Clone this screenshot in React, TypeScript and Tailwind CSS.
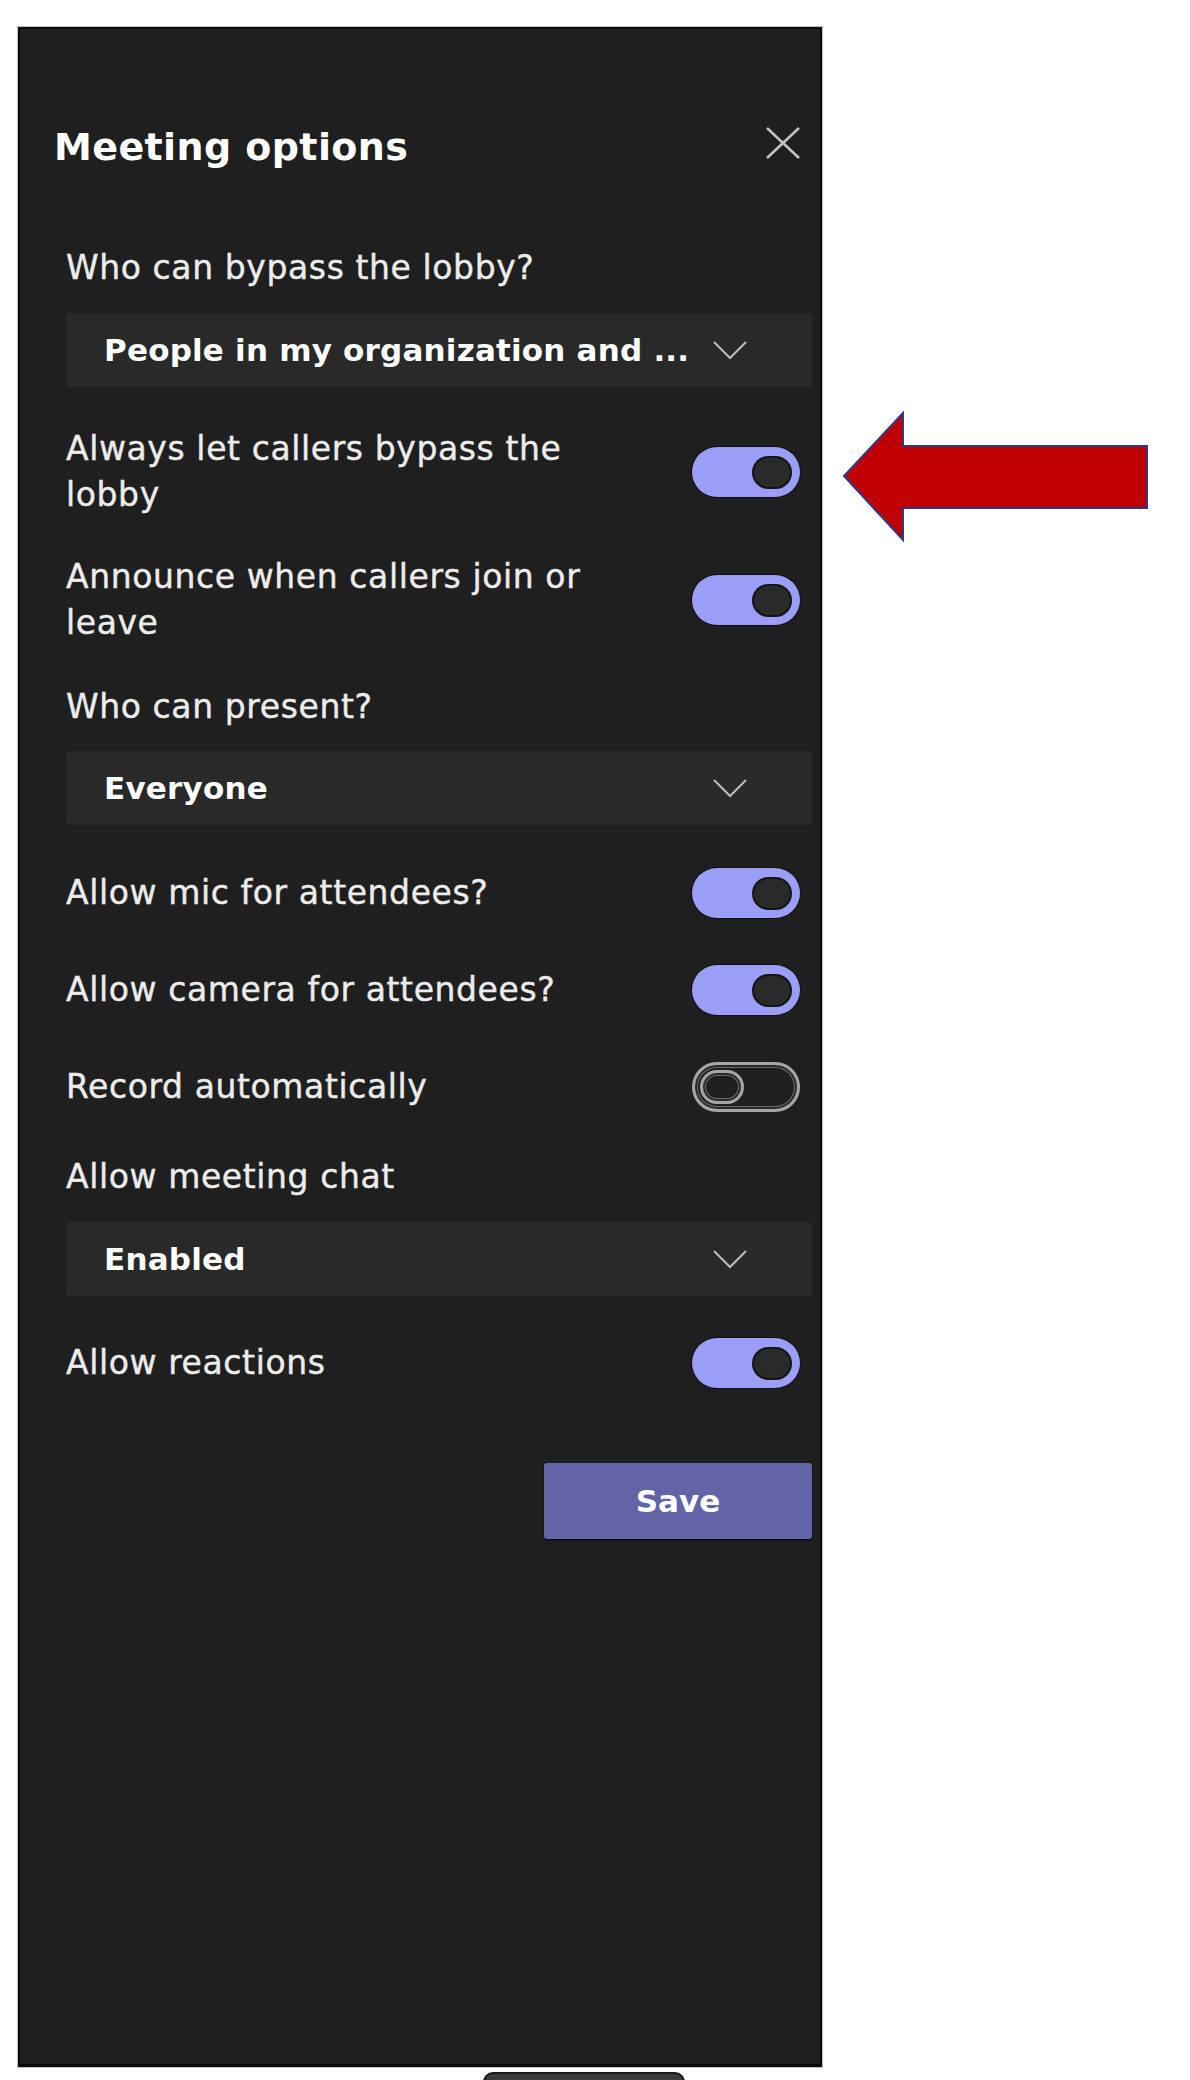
import React from "react";

function Chevron() {
  return (
    <svg width="36" height="20" viewBox="0 0 36 20" className="shrink-0">
      <polyline points="2,2 18,18 34,2" fill="none" stroke="#bdbdbd" strokeWidth="2" />
    </svg>
  );
}

function CloseIcon() {
  return (
    <svg width="38" height="34" viewBox="0 0 38 34" className="shrink-0">
      <line x1="3" y1="2" x2="35" y2="32" stroke="#c4c4c4" strokeWidth="2.5" />
      <line x1="35" y1="2" x2="3" y2="32" stroke="#c4c4c4" strokeWidth="2.5" />
    </svg>
  );
}

function Toggle({ on }: { on: boolean }) {
  if (on) {
    return (
      <div className="w-[108px] h-[50px] rounded-full bg-[#9b9ef6] flex items-center justify-end pr-[8px] shrink-0 shadow-[0_0_0_1px_#111]">
        <div className="w-[40px] h-[33px] rounded-full bg-[#2a2a2a] border-2 border-[#151515]" />
      </div>
    );
  }
  return (
    <div className="w-[108px] h-[50px] rounded-full border-[3px] border-[#a6a6a6] flex items-center pl-[5px] shrink-0 shadow-[inset_0_0_0_2px_#2a2a2a,inset_0_0_0_3px_#6a6a6a]">
      <div className="w-[44px] h-[34px] rounded-full border-[3px] border-[#a6a6a6] shadow-[inset_0_0_0_2px_#2a2a2a,inset_0_0_0_3px_#6a6a6a]" />
    </div>
  );
}

function Dropdown({ value, className }: { value: string; className: string }) {
  return (
    <div
      className={`h-[74px] rounded-[4px] bg-[#292929] flex items-center justify-between pl-[38px] pr-[64px] ${className}`}
    >
      <span className="font-bold text-[31px] leading-[40px] text-white whitespace-nowrap tracking-[0.2px]">{value}</span>
      <Chevron />
    </div>
  );
}

function ToggleRow({ label, on, className }: { label: string; on: boolean; className: string }) {
  return (
    <div className={`flex items-center justify-between pr-[12px] ${className}`}>
      <div className="w-[540px] text-[33px] leading-[46px] text-[#ececec] tracking-[0.6px] [-webkit-text-stroke:0.4px_#ececec]">
        {label}
      </div>
      <Toggle on={on} />
    </div>
  );
}

function Label({ text, className }: { text: string; className: string }) {
  return (
    <div
      className={`text-[33px] leading-[46px] text-[#ececec] tracking-[0.6px] [-webkit-text-stroke:0.4px_#ececec] ${className}`}
    >
      {text}
    </div>
  );
}

export default function App() {
  return (
    <div className="relative w-[1190px] h-[2080px] bg-white overflow-hidden font-['DejaVu_Sans',sans-serif]">
      <div className="pt-[27px] pl-[18px]">
        <div className="w-[804px] h-[2040px] bg-[#1f1f1f] border-2 border-b-[3px] border-[#0a0a0a] shadow-[0_0_0_1px_#c4c4c4] flex flex-col">
          <div className="mt-[95px] h-[46px] flex items-center justify-between pl-[34px] pr-[18px]">
            <span className="font-bold text-[38px] leading-[46px] text-white tracking-[0.4px]">Meeting options</span>
            <div className="-mt-[8px]">
              <CloseIcon />
            </div>
          </div>
          <div className="pl-[46px] pr-[8px] flex flex-col">
            <Label text="Who can bypass the lobby?" className="mt-[75px]" />
            <Dropdown value="People in my organization and ..." className="mt-[22px]" />
            <ToggleRow label="Always let callers bypass the lobby" on className="mt-[39px]" />
            <ToggleRow label="Announce when callers join or leave" on className="mt-[36px]" />
            <Label text="Who can present?" className="mt-[38px]" />
            <Dropdown value="Everyone" className="mt-[21px]" />
            <ToggleRow label="Allow mic for attendees?" on className="mt-[43px] h-[50px]" />
            <ToggleRow label="Allow camera for attendees?" on className="mt-[47px] h-[50px]" />
            <ToggleRow label="Record automatically" on={false} className="mt-[47px] h-[50px]" />
            <Label text="Allow meeting chat" className="mt-[42px]" />
            <Dropdown value="Enabled" className="mt-[22px]" />
            <ToggleRow label="Allow reactions" on className="mt-[42px] h-[50px]" />
            <div className="mt-[75px] flex justify-end">
              <button className="w-[268px] h-[76px] rounded-[3px] bg-[#6264a7] text-white font-bold text-[31px] shadow-[0_1px_2px_#000]">
                Save
              </button>
            </div>
          </div>
        </div>
        <div className="ml-[465px] mt-[5px] w-[202px] h-[14px] rounded-t-[10px] bg-[#3c3c3c] border-2 border-b-0 border-[#1a1a1a]" />
      </div>

      <svg
        className="absolute left-[840px] top-[410px]"
        width="312"
        height="134"
        viewBox="0 0 312 134"
      >
        <polygon
          points="4,66 63,3 63,36 307,36 307,98 63,98 63,130"
          fill="#c00000"
          stroke="#2e3a87"
          strokeWidth="2"
          strokeLinejoin="miter"
        />
      </svg>
    </div>
  );
}
